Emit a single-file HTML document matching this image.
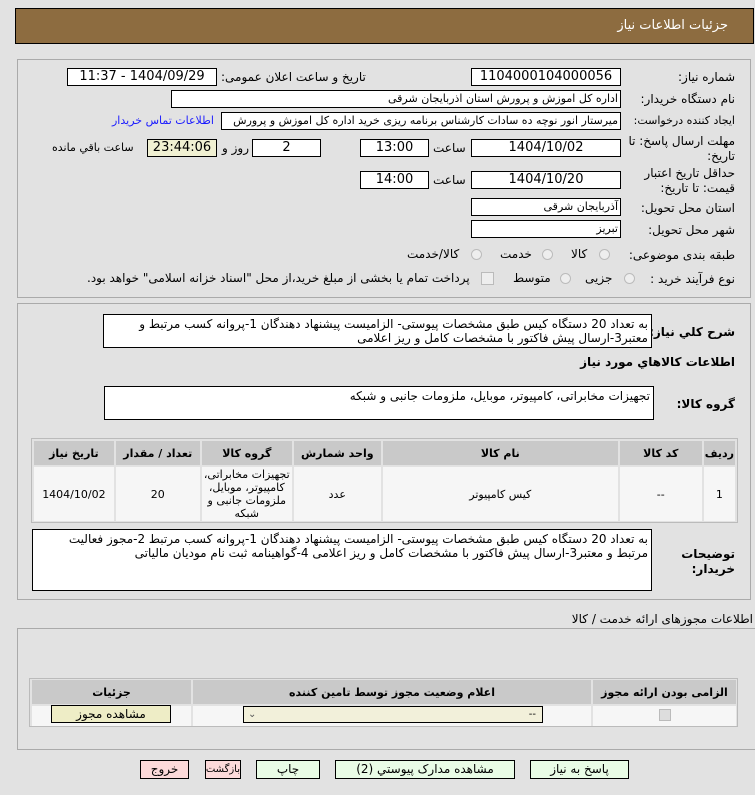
<!DOCTYPE html>
<html><head><meta charset="utf-8">
<style>
body{margin:0;width:755px;height:795px;background:#e2e2e2;font-family:"DejaVu Sans","Liberation Sans",sans-serif;font-size:12px;color:#000;position:relative;overflow:hidden}
.a{position:absolute;white-space:nowrap;direction:rtl}
.f{position:absolute;background:#fff;border:1px solid #000;box-sizing:border-box;height:18px;line-height:16px;text-align:center;font-size:13px;direction:rtl;overflow:hidden;white-space:nowrap}
.r{text-align:right;padding-right:2px;font-size:11px}
.lb{position:absolute;right:20px;direction:rtl;white-space:nowrap;font-size:12px;text-align:right}
.panel{position:absolute;border:1px solid #aaa;box-sizing:border-box}
.ta{position:absolute;background:#fff;border:1px solid #000;box-sizing:border-box;direction:rtl;text-align:right;padding:2px 3px;font-size:12px;line-height:20px}
.rad{position:absolute;width:11px;height:11px;border-radius:50%;border:1px solid #bbb;background:#eee;box-sizing:border-box}
table{border-collapse:separate;border-spacing:2px;position:absolute;direction:rtl}
td,th{text-align:center;font-size:11px}
th{background:#c9c9c9;height:22px}
td{background:#f6f6f6}
.btn{position:absolute;border:1px solid #000;box-sizing:border-box;height:19px;line-height:17px;text-align:center;font-size:12px;background:#e9fce6;direction:rtl;white-space:nowrap}
.pk{background:#fcdada}
</style></head><body>
<div style="position:absolute;left:15px;top:8px;width:739px;height:36px;background:#8d6c40;border:1px solid #000;box-sizing:border-box"></div>
<div class="a" style="right:27px;top:18px;color:#fff;font-size:13px">جزئیات اطلاعات نیاز</div>

<div class="panel" style="left:17px;top:59px;width:734px;height:239px"></div>
<div class="lb" style="top:70px">شماره نیاز:</div>
<div class="f" style="left:471px;top:68px;width:150px">1104000104000056</div>
<div class="a" style="left:221px;top:70px;font-size:12px">تاریخ و ساعت اعلان عمومی:</div>
<div class="f" style="left:67px;top:68px;width:150px">1404/09/29 - 11:37</div>

<div class="lb" style="top:92px">نام دستگاه خریدار:</div>
<div class="f r" style="left:171px;top:90px;width:450px">اداره کل اموزش و پرورش استان اذربایجان شرقی</div>

<div class="lb" style="top:114px;font-size:11px">ایجاد کننده درخواست:</div>
<div class="f r" style="left:221px;top:112px;width:400px">میرستار انور نوچه ده سادات کارشناس برنامه ریزی خرید اداره کل اموزش و پرورش</div>
<div class="a" style="left:112px;top:114px;color:#1a1aff;font-size:11px">اطلاعات تماس خریدار</div>

<div class="lb" style="top:134px;line-height:15px">مهلت ارسال پاسخ: تا<br>تاریخ:</div>
<div class="f" style="left:471px;top:139px;width:150px">1404/10/02</div>
<div class="a" style="left:433px;top:141px;font-size:12px">ساعت</div>
<div class="f" style="left:360px;top:139px;width:69px">13:00</div>
<div class="f" style="left:252px;top:139px;width:69px">2</div>
<div class="a" style="left:222px;top:141px;font-size:12px">روز و</div>
<div class="f" style="left:147px;top:139px;width:70px;background:#f0f0d2">23:44:06</div>
<div class="a" style="left:52px;top:141px;font-size:11px">ساعت باقي مانده</div>

<div class="lb" style="top:166px;line-height:15px">حداقل تاریخ اعتبار<br>قیمت: تا تاریخ:</div>
<div class="f" style="left:471px;top:171px;width:150px">1404/10/20</div>
<div class="a" style="left:433px;top:173px;font-size:12px">ساعت</div>
<div class="f" style="left:360px;top:171px;width:69px">14:00</div>

<div class="lb" style="top:201px">استان محل تحویل:</div>
<div class="f r" style="left:471px;top:198px;width:150px">آذربایجان شرقی</div>
<div class="lb" style="top:223px">شهر محل تحویل:</div>
<div class="f r" style="left:471px;top:220px;width:150px">تبریز</div>

<div class="lb" style="top:248px">طبقه بندی موضوعی:</div>
<div class="rad" style="left:599px;top:249px"></div><div class="a" style="left:571px;top:247px">کالا</div>
<div class="rad" style="left:542px;top:249px"></div><div class="a" style="left:500px;top:247px">خدمت</div>
<div class="rad" style="left:471px;top:249px"></div><div class="a" style="left:407px;top:247px">کالا/خدمت</div>

<div class="lb" style="top:272px">نوع فرآیند خرید :</div>
<div class="rad" style="left:624px;top:273px"></div><div class="a" style="left:585px;top:271px">جزیی</div>
<div class="rad" style="left:560px;top:273px"></div><div class="a" style="left:513px;top:271px">متوسط</div>
<div style="position:absolute;left:481px;top:272px;width:11px;height:11px;border:1px solid #bbb;background:#eee"></div>
<div class="a" style="left:87px;top:271px;font-size:12px">پرداخت تمام یا بخشی از مبلغ خرید،از محل "اسناد خزانه اسلامی" خواهد بود.</div>

<div class="panel" style="left:17px;top:303px;width:734px;height:297px"></div>
<div class="lb" style="top:325px;font-weight:bold">شرح کلي نیاز:</div>
<div class="ta" style="left:103px;top:314px;width:549px;height:34px;line-height:14px">به تعداد 20 دستگاه کیس طبق مشخصات پیوستی- الزامیست پیشنهاد دهندگان 1-پروانه کسب مرتبط و معتبر3-ارسال پیش فاکتور با مشخصات کامل و ریز اعلامی</div>
<div class="lb" style="top:355px;font-weight:bold">اطلاعات کالاهاي مورد نیاز</div>
<div class="lb" style="top:397px;font-weight:bold">گروه کالا:</div>
<div class="ta" style="left:104px;top:386px;width:550px;height:34px;line-height:14px">تجهیزات مخابراتی، کامپیوتر، موبایل، ملزومات جانبی و شبکه</div>

<div style="position:absolute;left:31px;top:438px;width:707px;height:85px;border:1px solid #bbb;box-sizing:border-box"></div>
<table style="left:32px;top:439px;width:705px">
<tr><th style="width:27px">ردیف</th><th style="width:80px">کد کالا</th><th style="width:233px">نام کالا</th><th style="width:85px">واحد شمارش</th><th style="width:88px">گروه کالا</th><th style="width:82px">تعداد / مقدار</th><th>تاریخ نیاز</th></tr>
<tr style="height:54px"><td>1</td><td>--</td><td>کیس کامپیوتر</td><td>عدد</td><td style="line-height:13px">تجهیزات مخابراتی، کامپیوتر، موبایل، ملزومات جانبی و شبکه</td><td>20</td><td>1404/10/02</td></tr>
</table>

<div class="lb" style="top:547px;font-weight:bold;line-height:15px">توضیحات<br>خریدار:</div>
<div class="ta" style="left:32px;top:529px;width:620px;height:62px;line-height:14px">به تعداد 20 دستگاه کیس طبق مشخصات پیوستی- الزامیست پیشنهاد دهندگان 1-پروانه کسب مرتبط 2-مجوز فعالیت مرتبط و معتبر3-ارسال پیش فاکتور با مشخصات کامل و ریز اعلامی 4-گواهینامه ثبت نام مودیان مالیاتی</div>

<div class="a" style="right:2px;top:612px;font-size:12px">اطلاعات مجوزهای ارائه خدمت / کالا</div>
<div class="panel" style="left:17px;top:628px;width:740px;height:122px"></div>
<div style="position:absolute;left:29px;top:678px;width:709px;height:49px;border:1px solid #bbb;box-sizing:border-box"></div>
<table style="left:30px;top:678px;width:708px;border-spacing:2px">
<tr><th style="width:141px;height:21px">الزامی بودن ارائه مجوز</th><th style="width:396px">اعلام وضعیت مجوز توسط تامین کننده</th><th>جزئیات</th></tr>
<tr style="height:20px"><td><span style="display:inline-block;width:10px;height:10px;border:1px solid #bbb;background:#ddd"></span></td><td></td><td></td></tr>
</table>
<div style="position:absolute;left:243px;top:706px;width:300px;height:17px;border:1px solid #000;box-sizing:border-box;background:#f2f0da;font-size:10px;line-height:15px"><span style="position:absolute;left:4px;color:#555">⌄</span><span style="position:absolute;right:6px">--</span></div>
<div class="btn" style="left:51px;top:705px;width:120px;height:18px;background:#eeedc6;line-height:16px">مشاهده مجوز</div>

<div class="btn" style="left:530px;top:760px;width:99px">پاسخ به نیاز</div>
<div class="btn" style="left:335px;top:760px;width:180px">مشاهده مدارک پیوستي (2)</div>
<div class="btn" style="left:256px;top:760px;width:64px">چاپ</div>
<div class="btn pk" style="left:205px;top:760px;width:36px;font-size:10px;overflow:hidden">بازگشت</div>
<div class="btn pk" style="left:140px;top:760px;width:49px">خروج</div>
</body></html>
